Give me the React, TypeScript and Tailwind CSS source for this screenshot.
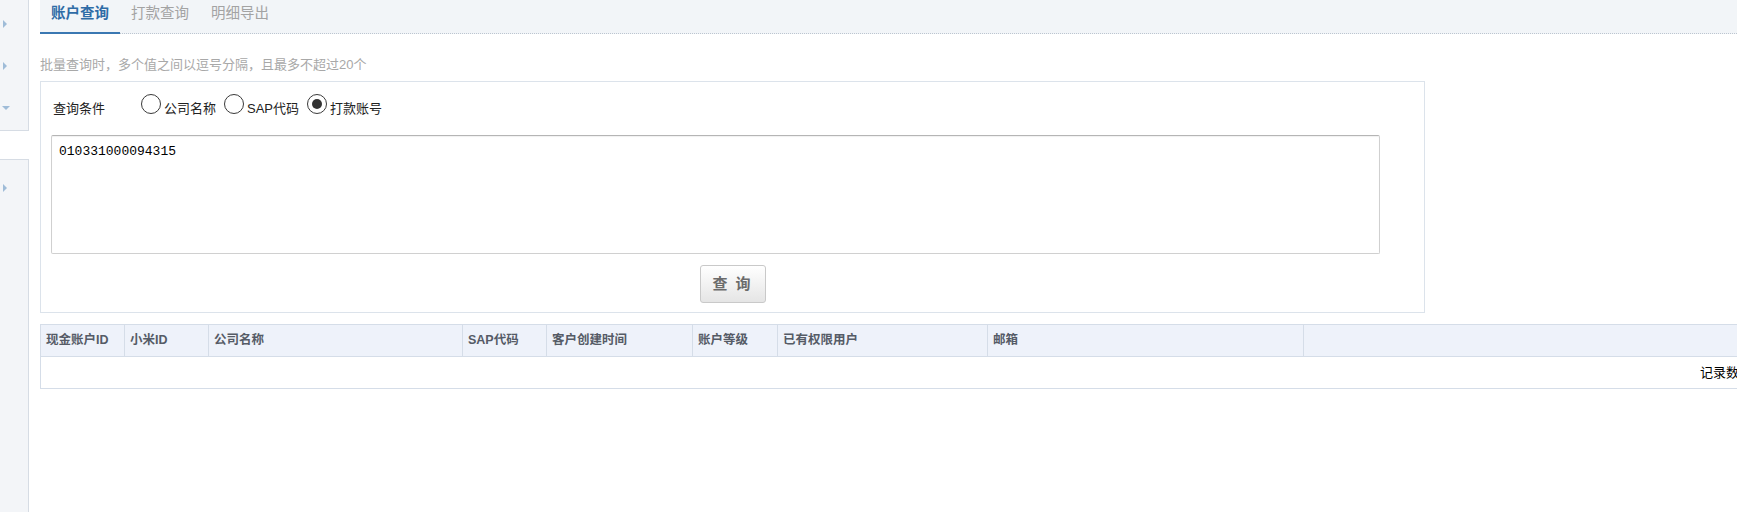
import React from "react";

const font = { fontFamily: '"Liberation Sans", "Noto Sans CJK SC", sans-serif' };

function RightArrow() {
  return <div className="w-0 h-0 border-y-[4px] border-y-transparent border-l-[4px] border-l-[#9fbcd8]" />;
}
function DownArrow() {
  return <div className="w-0 h-0 border-x-[4px] border-x-transparent border-t-[4px] border-t-[#9fbcd8]" />;
}

function Radio({ checked, label }: { checked?: boolean; label: string }) {
  return (
    <div className="flex items-end">
      <div className="mb-[4px] w-[20px] h-[20px] rounded-full border border-[#3a3a3a] bg-white flex items-center justify-center">
        {checked && <div className="w-[10px] h-[10px] rounded-full bg-[#333]" />}
      </div>
      <span className="ml-[3px] text-[13px] leading-[18px] text-[#222]">{label}</span>
    </div>
  );
}

const cols: { w: string; label: string }[] = [
  { w: "w-[84px]", label: "现金账户ID" },
  { w: "w-[84px]", label: "小米ID" },
  { w: "w-[254px]", label: "公司名称" },
  { w: "w-[84px]", label: "SAP代码" },
  { w: "w-[146px]", label: "客户创建时间" },
  { w: "w-[85px]", label: "账户等级" },
  { w: "w-[210px]", label: "已有权限用户" },
  { w: "w-[316px]", label: "邮箱" },
];

export default function App() {
  return (
    <div className="w-[1737px] h-[512px] overflow-hidden bg-white flex" style={font}>
      {/* Sidebar */}
      <div className="w-[29px] shrink-0 flex flex-col">
        <div className="h-[131px] bg-[#f3f5f8] border-r border-b border-[#d6dce4] pt-[3px]">
          <div className="h-[42px] flex items-center pl-[3px]"><RightArrow /></div>
          <div className="h-[42px] flex items-center pl-[3px]"><RightArrow /></div>
          <div className="h-[42px] flex items-center pl-[2px]"><DownArrow /></div>
        </div>
        <div className="h-[28px]" />
        <div className="flex-1 bg-[#f3f5f8] border-r border-t border-[#d6dce4] pt-[7px]">
          <div className="h-[42px] flex items-center pl-[3px]"><RightArrow /></div>
        </div>
      </div>

      {/* Main */}
      <div className="flex-1 min-w-0 overflow-hidden pl-[11px]">
        {/* Tabs */}
        <div className="h-[34px] bg-[#f2f5f8] border-b border-dotted border-[#bcc5d0] flex items-start">
          <div className="w-[80px] h-[34px] border-b-2 border-[#3a78b2] flex items-center justify-center pb-[4px] text-[14.5px] font-bold text-[#2f6ca6]">
            账户查询
          </div>
          <div className="w-[80px] h-[34px] border-b-2 border-transparent flex items-center justify-center pb-[4px] text-[14.5px] text-[#a3a3a3]">
            打款查询
          </div>
          <div className="w-[80px] h-[34px] border-b-2 border-transparent flex items-center justify-center pb-[4px] text-[14.5px] text-[#a3a3a3]">
            明细导出
          </div>
        </div>

        {/* Hint */}
        <div className="mt-[22px] mb-[7px] text-[13px] leading-[18px] text-[#a8a8a8]">
          批量查询时，多个值之间以逗号分隔，且最多不超过20个
        </div>

        {/* Query box */}
        <div className="w-[1385px] border border-[#dce3eb] pt-[12px] pb-[9px]">
          <div className="flex items-end pl-[12px]">
            <span className="text-[13px] leading-[18px] text-[#222]">查询条件</span>
            <div className="ml-[36px] flex items-end gap-[8px]">
              <Radio label="公司名称" />
              <Radio label="SAP代码" />
              <Radio checked label="打款账号" />
            </div>
          </div>
          <textarea
            readOnly
            defaultValue="010331000094315"
            className="block mt-[17px] ml-[10px] w-[1329px] h-[119px] resize-none outline-none border border-[#d0d0d0] border-t-[#b5b5b5] rounded-[2px] shadow-[inset_0_1px_1px_rgba(0,0,0,0.06)] pl-[7px] pt-[8px] text-[13px] leading-[16px] text-black"
            style={{ fontFamily: '"Liberation Mono", monospace' }}
          />
          <div className="mt-[11px] flex justify-center">
            <button className="w-[66px] h-[38px] rounded-[3px] border border-[#c9c9c9] bg-gradient-to-b from-white to-[#e5e5e5] text-[15px] font-bold text-[#6b6b6b] tracking-[2px]">
              查 询
            </button>
          </div>
        </div>

        {/* Table */}
        <div className="mt-[11px] w-[1760px] border border-[#d5dde8]">
          <div className="flex h-[32px] bg-[#eef2fa] border-b border-[#d5dde8]">
            {cols.map((c) => (
              <div
                key={c.label}
                className={`${c.w} shrink-0 border-r border-[#d5dde8] pl-[5px] flex items-center text-[12.5px] font-bold text-[#555b66] whitespace-nowrap`}
              >
                {c.label}
              </div>
            ))}
            <div className="flex-1" />
          </div>
          <div className="h-[31px] flex items-center pl-[1659px] whitespace-nowrap text-[13px] text-black">
            记录数：0
          </div>
        </div>
      </div>
    </div>
  );
}
